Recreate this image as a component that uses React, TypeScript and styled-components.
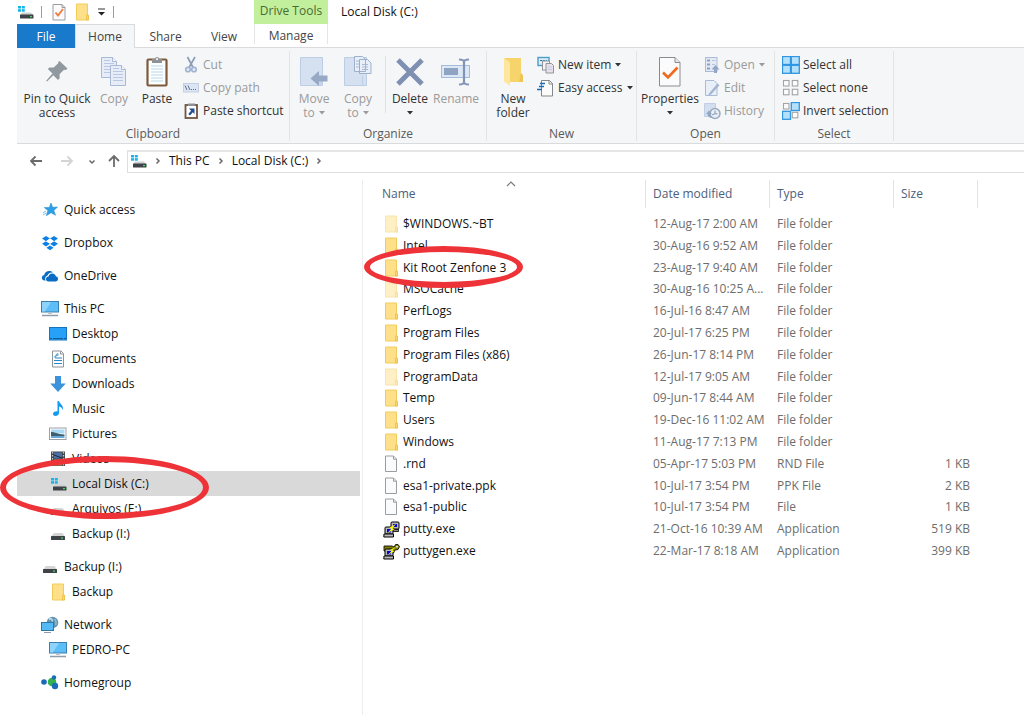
import React from 'react';
import styled, { createGlobalStyle } from 'styled-components';

const Global = createGlobalStyle`
  * { box-sizing: border-box; }
  body { margin: 0; background: #fff; font-family: "Open Sans", "Noto Sans", sans-serif; font-size: 12px; color: #111; }
  button { font: inherit; color: inherit; background: none; border: 0; padding: 0; margin: 0; }
  a { color: inherit; text-decoration: none; }
  svg { display: block; flex: none; }
`;

/* ---------- icons ---------- */

const Svg = ({ w, h, children }: { w: number; h: number; children: React.ReactNode }) => (
  <svg width={w} height={h} viewBox={`0 0 ${w} ${h}`} aria-hidden="true">{children}</svg>
);

const Drive = () => (
  <Svg w={16} h={16}>
    <path d="M4 7h8.500L15 10.500H1z" fill="#d3d4d6" />
    <rect x="1" y="10" width="14" height="4" rx=".5" fill="#3f4347" />
    <rect x="11" y="11.5" width="2" height="1.2" fill="#3fe05a" />
  </Svg>
);
const SystemDrive = () => (
  <Svg w={17} h={16}>
    <g fill="#17b4ea">
      <rect x="1" y="2" width="3" height="2.5" /><rect x="4.8" y="2" width="3" height="2.5" />
      <rect x="1" y="5.2" width="3" height="2.5" /><rect x="4.8" y="5.2" width="3" height="2.5" />
    </g>
    <path d="M5 8.5h9l2 2.5H3z" fill="#cfd1d3" />
    <rect x="3" y="10.5" width="13.5" height="4" rx=".5" fill="#3f4347" />
    <rect x="13" y="12" width="2" height="1.2" fill="#3fe05a" />
  </Svg>
);
const Folder = ({ faded = false }: { faded?: boolean }) => (
  <svg width="16" height="18" viewBox="-1 0 16 18" aria-hidden="true" opacity={faded ? 0.5 : 1}>
    <path d="M1.5 1h11v12l1 .5V17H1.5z" fill="#fee08a" stroke="#f2cc5b" />
    <path d="M11.5 12h2v5h-2z" fill="#fbd767" stroke="#e9bf49" strokeWidth=".8" />
  </svg>
);
const Page = () => (
  <svg width="16" height="18" viewBox="-1 0 16 18" aria-hidden="true">
    <path d="M1.5 1h8l3 3v12.5h-11z" fill="#fafbfc" stroke="#9a9da0" />
    <path d="M9.5 1v3.2h3" fill="#e4e6e8" stroke="#9a9da0" />
  </svg>
);
const Putty = () => (
  <Svg w={17} h={17}>
    <rect x="8" y="1" width="8" height="7" rx="1" fill="#b9b9b9" stroke="#000" />
    <rect x="10" y="3" width="4" height="3" fill="#0000e0" />
    <rect x="8.5" y="8.5" width="7" height="2" fill="#8a8a8a" stroke="#000" strokeWidth=".8" />
    <rect x="2" y="6" width="8" height="7" rx="1" fill="#b9b9b9" stroke="#000" />
    <rect x="4" y="8" width="4" height="3.5" fill="#0000e0" />
    <path d="M1 13h9.5v3H.8z" fill="#b9b9b9" stroke="#000" />
    <path d="M13 3L6.500 6.500l2 1L4.500 12l7-3.800-2-1z" fill="#ff0" />
  </Svg>
);
const PuttyGen = () => (
  <Svg w={17} h={17}>
    <path d="M1 3h8l2 1 1.5-2.5h2.500l1.500 2-1.500 3-3 .5-1.500 3L3 8H1z" fill="#7f7f00" stroke="#111" strokeWidth=".9" />
    <rect x="13.2" y="3" width="1.5" height="1.5" fill="#fff" />
    <rect x="2" y="6" width="8" height="7" rx="1" fill="#b9b9b9" stroke="#000" />
    <rect x="4" y="8" width="4" height="3.5" fill="#0000e0" />
    <path d="M1 13h9.5v3H.8z" fill="#b9b9b9" stroke="#000" />
    <path d="M13 4L7 7l2 .8L4.500 12l7-3.800-2-1z" fill="#ff0" />
  </Svg>
);
const Star = () => (
  <Svg w={16} h={16}>
    <path d="M9 1l1.600 4.300 4.900-.2-3.700 3.300 1.700 4.800L9 10.700l-4.700 3 1.600-5.200L2.300 5.600l5-.1z" fill="#2d9fe6" stroke="#2d8fd0" strokeWidth=".6" />
    <path d="M4 9L.8 10.800M4.200 11l-3.200 2" stroke="#79c2f0" />
  </Svg>
);
const Dropbox = () => (
  <Svg w={18} h={16}>
    <path d="M5 1l4 2.6-4 2.6-4-2.6zM13 1l4 2.6-4 2.6-4-2.6zM5 6.2l4 2.6-4 2.6-4-2.6zM13 6.2l4 2.6-4 2.6-4-2.6zM9 10.6l3.6 2.2L9 15.2l-3.6-2.4z" fill="#0d80e8" />
    <path d="M9 3.6l4 2.6-4 2.6-4-2.6z" fill="#fff" />
  </Svg>
);
const OneDrive = () => (
  <Svg w={18} h={14}>
    <path d="M4.500 11.500H3A2.800 2.800 0 0 1 3.200 6C4 2.500 8.600.5 11.800 3.500 8.800 3.200 7 4.600 6.500 6.600 4.500 7 3.600 9.500 4.500 11.500z" fill="#0a6cc4" />
    <path d="M7.500 12.500a2.500 2.500 0 0 1 0-5c.8-4 6.500-4 7.300-.3a2.700 2.700 0 0 1 .2 5.300z" fill="#0a6cc4" />
  </Svg>
);
const Computer = () => (
  <Svg w={18} h={18}>
    <rect x=".5" y="1.5" width="17" height="10.5" fill="#5cbdf7" stroke="#3a7fae" />
    <path d="M1 2h9L4 11.5H1z" fill="#8ed3fb" />
    <path d="M7 12.5h4V14H7z" fill="#bcc3c9" />
    <path d="M1 15.5h16" stroke="#8e9cab" strokeWidth="1.5" />
  </Svg>
);
const Desktop = () => (
  <Svg w={18} h={14}>
    <rect x=".5" y=".5" width="17" height="12.5" fill="#27a1f8" stroke="#1673bd" />
    <path d="M1 11.5h16" stroke="#125e9d" strokeDasharray="2 1 10 1" />
  </Svg>
);
const Documents = () => (
  <Svg w={16} h={18}>
    <path d="M2.500 1H11l2.500 2.500V17h-11z" fill="#fdfdfd" stroke="#8f949a" />
    <path d="M8.500 5H6M12 8H5M12 10.500H4M12 13.500H4" stroke="#2d86c5" />
    <path d="M4.500 7.500l3.500-4" stroke="#59a8d9" strokeWidth="1.500" />
    <path d="M10.500 1.500V4H13" stroke="#8f949a" fill="none" />
  </Svg>
);
const Download = () => (
  <Svg w={18} h={18}>
    <path d="M6 1h6v7.5h4.8L9 17 1.200 8.500H6z" fill="#3b93dc" />
  </Svg>
);
const Music = () => (
  <Svg w={16} h={17}>
    <path d="M7.500 1H9c.5 3 5.500 4.500 3.500 9.500C12.500 8 11 7 9 6.500V13c0 3.500-6 4-6 1 0-2 2.500-3 4.500-2.500z" fill="#149bf0" />
  </Svg>
);
const Pictures = () => (
  <Svg w={18} h={14}>
    <rect x=".5" y="1" width="16.5" height="11.5" fill="#fff" stroke="#9ba0a5" />
    <rect x="2" y="2.5" width="13.5" height="4" fill="#a9daf3" />
    <path d="M2 5c4 0 6 2 13.500 2.500V9H2z" fill="#40606b" />
    <rect x="2" y="9" width="13.5" height="2" fill="#67a9d8" />
  </Svg>
);
const Videos = () => (
  <Svg w={16} h={16}>
    <rect x="1" y=".5" width="14" height="14.5" fill="#43464b" />
    <path d="M2.500 1v14M13.500 1v14" stroke="#c8cacd" strokeWidth="1.2" strokeDasharray="1.5 1.5" />
    <rect x="4" y="1.500" width="8" height="6" fill="#4b6fa8" />
    <rect x="4" y="8.500" width="8" height="6" fill="#c08a4a" />
    <path d="M4 4l8 3M4 12l4-3 4 4" stroke="#22242a" />
  </Svg>
);
const Network = () => (
  <Svg w={18} h={18}>
    <circle cx="11.5" cy="6.5" r="5.8" fill="#5f93b1" />
    <path d="M8 3.500c2-2 4 0 3 2" stroke="#c4dfec" fill="none" strokeWidth="1.500" />
    <path d="M13.500 3c2 2 2 4 1 6" stroke="#8fbcd2" fill="none" strokeWidth="1.500" />
    <rect x=".5" y="6.5" width="12" height="8" fill="#55b9f5" stroke="#2c77a8" />
    <path d="M3 16.500h7" stroke="#8e9cab" />
  </Svg>
);
const Homegroup = () => (
  <Svg w={18} h={15}>
    <circle cx="11" cy="7" r="4.3" fill="#35b34a" />
    <circle cx="3" cy="7" r="2.8" fill="#1a6bb8" />
    <circle cx="13" cy="2.5" r="2.2" fill="#1a6bb8" />
    <circle cx="14" cy="11" r="3.2" fill="#1a6bb8" />
  </Svg>
);

const Pin = () => (
  <Svg w={24} h={32}>
    <path d="M14.500 5l8 7.500-1.500 1.500-2-.3-4.500 4.600.2 4-1.700 1.700-4.700-4.700L2 25.500l-.8-.8 6.300-7.200-4.700-4.500 1.700-1.600 4.200.2L13.500 7l-.3-1z" fill="#8f999f" />
  </Svg>
);
const Sheet = ({ x, y }: { x: number; y: number }) => (
  <g transform={`translate(${x} ${y})`}>
    <path d="M.5.5h11l4 4v16H.5z" fill="#e6edf8" stroke="#a9b9d4" />
    <path d="M11.500.5v4h4" fill="#f6f9fd" stroke="#a9b9d4" />
    <path d="M3 6.500h10M3 9.500h10M3 12.500h10M3 15.500h10M3 3.500h6" stroke="#b9c8e0" />
  </g>
);
const CopyBig = () => <Svg w={26} h={32}><Sheet x={0} y={1} /><Sheet x={9} y={9} /></Svg>;
const PasteBig = () => (
  <Svg w={22} h={32}>
    <rect x="1.5" y="3.5" width="19" height="26" rx="1" fill="#fdfefe" stroke="#7d5a3c" strokeWidth="2.2" />
    <path d="M5 10h12M5 13h12M5 16h12M5 19h12M5 22h12M5 25h12" stroke="#b8d8ee" />
    <path d="M6 3h3a2 2 0 0 1 4 0h3v4H6z" fill="#8e9296" />
    <rect x="10" y="2.2" width="2" height="1.8" fill="#eee" />
  </Svg>
);
const Scissors = () => (
  <Svg w={16} h={18}>
    <path d="M4.500 1L10 11.500M12 1L6 11.500" stroke="#8d9db8" strokeWidth="1.7" />
    <circle cx="5" cy="13.500" r="2.300" fill="#e3eaf5" stroke="#9fb2d3" strokeWidth="1.6" />
    <circle cx="11" cy="13.500" r="2.300" fill="#e3eaf5" stroke="#9fb2d3" strokeWidth="1.6" />
  </Svg>
);
const CopyPath = () => (
  <Svg w={16} h={10}>
    <rect x=".5" y=".5" width="15" height="8.5" fill="#dbe5f3" stroke="#c3d0e4" />
    <path d="M2 2.500L4 7M5 2.500L7 7" stroke="#5f7390" />
    <path d="M8 6.500h6" stroke="#5f7390" strokeDasharray="1 1" />
  </Svg>
);
const PasteShortcut = () => (
  <Svg w={16} h={18}>
    <rect x="2.5" y="3" width="11.5" height="13" fill="#fff" stroke="#6f553f" strokeWidth="1.8" />
    <path d="M5 1.500h7V4H5z" fill="#8e9296" />
    <path d="M6 6.500h5.500V12L9.800 10.300 7 13.500 5.300 12l2.800-3.200z" fill="#1f4f94" />
  </Svg>
);
const MoveTo = () => (
  <Svg w={28} h={32}>
    <path d="M.5 1.500h22v28H.5z" fill="#d5e0f0" stroke="#bdcde4" />
    <path d="M19.500 22v7.500h3V22" fill="#c5d3e8" />
    <path d="M10.500 22.500L19 15v4.500h8.500v6H19V30z" fill="#98a9c5" />
  </Svg>
);
const CopyTo = () => (
  <Svg w={28} h={32}>
    <path d="M.5 1.500h22v28H.5z" fill="#d5e0f0" stroke="#bdcde4" />
    <path d="M18.500 20v9.500" stroke="#bdcde4" />
    <path d="M10.500.5h8l3 3v12h-11zM15.500 3.500h8l3.500 3.500v10.500H15.500z" fill="#e9eff8" stroke="#9db0cd" />
    <path d="M12 5h3M12 8h3M12 11h3M18 8.500h6M18 11h6M18 13.500h6" stroke="#a9b9d4" />
  </Svg>
);
const DeleteX = () => (
  <Svg w={28} h={32}>
    <path d="M2 4l24 24M26 4L2 28" stroke="#7e8fb1" strokeWidth="5" />
  </Svg>
);
const Rename = () => (
  <Svg w={30} h={32}>
    <rect x=".5" y="9.5" width="28" height="12" fill="#dde8f6" stroke="#a5bbdb" />
    <rect x="3" y="12" width="14" height="7" fill="#8fa3c3" />
    <path d="M18 3.500c3 0 4.500.5 5 2 .5-1.500 2-2 5-2M23 5v22M18 28.500c3 0 4.500-.5 5-2 .5 1.500 2 2 5 2" fill="none" stroke="#8194b5" strokeWidth="2.2" />
  </Svg>
);
const NewFolder = () => (
  <Svg w={22} h={32}>
    <path d="M2 2h17v15l2 2.500V26H8z" fill="#f7d36b" />
    <path d="M2 2l6 4.500V30l-6-4.500z" fill="#fee79c" />
    <path d="M19 17l2 2.500V26h-4z" fill="#f0c552" />
  </Svg>
);
const NewItem = () => (
  <Svg w={18} h={18}>
    <rect x="1" y="1.5" width="11" height="8" fill="#d9eef8" stroke="#4c9cc7" strokeWidth="1.4" />
    <path d="M3 4.500h7" stroke="#2674a3" strokeDasharray="2 1" />
    <rect x="5.5" y="5" width="7" height="9" fill="#f5f5f5" stroke="#8f949a" />
    <path d="M9 7.500h5.500l2 2V17H9z" fill="#eddfe8" stroke="#8f949a" />
    <path d="M11 11h4M11 13.500h4" stroke="#b5cdec" />
  </Svg>
);
const EasyAccess = () => (
  <Svg w={18} h={18}>
    <path d="M4.500 1.500h8l3 3V17h-11z" fill="#fbfbfb" stroke="#83878b" />
    <path d="M12 1.500V5h3.500" fill="none" stroke="#83878b" />
    <path d="M3 4.500h5M2 7.500h5M0 10.500h5" stroke="#1d69b5" strokeWidth="1.5" />
  </Svg>
);
const Properties = () => (
  <Svg w={24} h={32}>
    <path d="M1.500 1.500H17l5 5V30H1.500z" fill="#fbfbfb" stroke="#898c8f" />
    <path d="M17 1.500v5h5" fill="#e8e8e8" stroke="#898c8f" />
    <path d="M5 16.500l5 5 9.500-10" fill="none" stroke="#f2691e" strokeWidth="2.6" />
  </Svg>
);
const PropertiesSmall = () => (
  <Svg w={14} h={17}>
    <path d="M1 .5h9l3 3V16H1z" fill="#fbfbfb" stroke="#9a9da0" />
    <path d="M10 .5v3h3" fill="none" stroke="#9a9da0" />
    <path d="M3.500 8.500l2.500 3 5-6.500" fill="none" stroke="#f07a3c" strokeWidth="1.8" />
  </Svg>
);
const OpenIcon = () => (
  <Svg w={16} h={18}>
    <rect x="1.5" y="1.5" width="11.5" height="14" fill="#e4ebf6" stroke="#abbbd6" />
    <path d="M3 4.500h3M3 8.500h3M3 12.500h3" stroke="#8b9fc1" strokeWidth="2.2" />
    <path d="M8 4.500h3.500M8 8.500h3" stroke="#b5c4dc" />
    <path d="M11.500 9l4 4.500H13V17h-3v-3.500H7.500z" fill="#93a6c6" />
  </Svg>
);
const EditIcon = () => (
  <Svg w={16} h={18}>
    <path d="M1.500 1.500H10l3 3v12H1.500z" fill="#e8eff9" stroke="#abbbd6" />
    <path d="M5 14.500l8.500-10 2 1.800L7 15.500l-3 .8z" fill="#a4b5d0" />
  </Svg>
);
const HistoryIcon = () => (
  <Svg w={17} h={18}>
    <path d="M.5 1.500h11v13H.5z" fill="#d3deef" stroke="#c0cfe6" />
    <circle cx="11" cy="11.5" r="5" fill="#e9eff7" stroke="#9aa9bf" strokeWidth="1.5" />
    <path d="M11 8.500v3.300h2.500M8 13l3-1.300" stroke="#8596b0" fill="none" />
    <path d="M2 12l3-3.500L8 12H6.500c0 2 1 3 2.500 4-3.500 0-5.500-1.500-5.500-4z" fill="#93a6c6" />
  </Svg>
);
const tile = { on: ['#b5e0fb', '#2f96e2'], off: ['#fcfcfc', '#a4a4a4'] };
const Tiles = ({ pattern }: { pattern: boolean[] }) => (
  <Svg w={18} h={18}>
    {pattern.map((on, i) => {
      const inset = on ? 0.5 : 1.5;
      const side = on ? 8 : 5.5;
      const [fill, stroke] = on ? tile.on : tile.off;
      return (
        <rect key={i} x={(i % 2) * 8.8 + inset} y={Math.floor(i / 2) * 8.8 + inset} width={side} height={side} fill={fill} stroke={stroke} strokeWidth={on ? 1.3 : 1.1} />
      );
    })}
  </Svg>
);
const Arrow = ({ dir, color }: { dir: 'left' | 'right' | 'up'; color: string }) => {
  const d = {
    left: 'M13 7H2M6.500 2.500L2 7l4.500 4.500',
    right: 'M1 7h11M7.500 2.500L12 7l-4.500 4.500',
    up: 'M7 13V2M2 7l5-5 5 5',
  }[dir];
  return <Svg w={15} h={15}><path d={d} fill="none" stroke={color} strokeWidth="1.8" /></Svg>;
};
const Chevron = ({ dir }: { dir: 'right' | 'down' }) => (
  <Svg w={8} h={8}>
    <path d={dir === 'right' ? 'M2.500 1.500L5 4 2.500 6.500' : 'M1.500 2.500L4 5l2.500-2.500'} fill="none" stroke="#6a6a6a" strokeWidth="1.5" />
  </Svg>
);
const SortUp = () => <Svg w={10} h={6}><path d="M1 5l4-4 4 4" fill="none" stroke="#7a7a7a" strokeWidth="1.2" /></Svg>;
const Caret = () => <Svg w={6} h={4}><path d="M0 0h6L3 3.500z" fill="currentColor" /></Svg>;
const Customize = () => (
  <Svg w={8} h={9}><path d="M0 1h7" stroke="#333" /><path d="M0 4h7L3.500 7.500z" fill="#222" /></Svg>
);

/* ---------- window frame ---------- */

const Window = styled.div`
  min-height: 100vh;
  padding-left: 17px;
  display: flex;
  flex-direction: column;
`;
const TopBar = styled.header`
  display: flex;
  height: 48px;
`;
const LeftTop = styled.div`
  width: 237px;
  display: flex;
  flex-direction: column;
`;
const QuickBar = styled.div`
  height: 24px;
  display: flex;
  align-items: center;
  gap: 8px;
`;
const QuickButton = styled.button`
  display: flex;
`;
const QuickRule = styled.span`
  width: 1px;
  height: 12px;
  margin: 0 2px 0 -1px;
  background: #9c9c9c;
`;
const Tabs = styled.nav`
  display: flex;
  height: 24px;
  border-bottom: 1px solid #dadbdc;
`;
const Tab = styled.button<{ $kind?: 'file' | 'active'; $w: number }>`
  width: ${p => p.$w}px;
  height: 24px;
  color: ${p => (p.$kind === 'file' ? '#fff' : '#444')};
  background: ${p => (p.$kind === 'file' ? '#1979ca' : p.$kind === 'active' ? '#f5f6f7' : 'transparent')};
  border: solid #dadbdc;
  border-width: ${p => (p.$kind === 'active' ? '1px 1px 0' : '0')};
`;
const ToolTab = styled.div`
  width: 74px;
  display: flex;
  flex-direction: column;
  border-bottom: 1px solid #dadbdc;
`;
const ToolTitle = styled.div`
  height: 24px;
  background: #c1ef9b;
  color: #4b6a33;
  line-height: 22px;
  text-align: center;
`;
const ToolButton = styled.button`
  height: 20px;
  line-height: 24px;
  color: #444;
  border: solid #e4e5e6;
  border-width: 0 1px;
`;
const Title = styled.h1`
  flex: 1;
  margin: 0;
  padding-left: 13px;
  font-size: 12px;
  font-weight: 400;
  line-height: 24px;
  border-bottom: 1px solid #dadbdc;
`;

/* ---------- ribbon ---------- */

const Ribbon = styled.div`
  display: flex;
  height: 96px;
  padding: 3px 0 2px;
  background: #f5f6f7;
  border-bottom: 1px solid #dadbdc;
`;
const Group = styled.section<{ $w: number }>`
  width: ${p => p.$w}px;
  display: flex;
  flex-direction: column;
  border-right: 1px solid #e2e3e4;
`;
const GroupBody = styled.div<{ $pad: number }>`
  flex: 1;
  display: flex;
  padding: 2px 0 0 ${p => p.$pad}px;
`;
const GroupLabel = styled.h2`
  margin: 0;
  font-size: 12px;
  font-weight: 400;
  line-height: 14px;
  color: #5a5a5a;
  text-align: center;
`;
const BigButton = styled.button<{ $w: number }>`
  width: ${p => p.$w}px;
  padding-top: 3px;
  display: flex;
  flex-direction: column;
  align-items: center;
  gap: 4px;
  line-height: 14px;
  white-space: nowrap;
  color: #333;
  &:disabled { color: #9a9a9a; }
`;
const BigLabel = styled.span`
  display: flex;
  flex-direction: column;
  align-items: center;
`;
const LabelLine = styled.span`
  display: flex;
  align-items: center;
  gap: 4px;
  height: 14px;
`;
const Rule = styled.span`
  width: 1px;
  height: 57px;
  margin: 3px 2px 0 5px;
  background: #dfe0e1;
`;
const SmallColumn = styled.div<{ $gap: number }>`
  display: flex;
  flex-direction: column;
  margin-left: ${p => p.$gap}px;
`;
const SmallButton = styled.button`
  height: 23px;
  display: flex;
  align-items: center;
  gap: 4px;
  white-space: nowrap;
  color: #333;
  &:disabled { color: #9a9a9a; }
`;
const IconSlot = styled.span<{ $w: number }>`
  width: ${p => p.$w}px;
  display: flex;
  justify-content: center;
`;

type BigProps = { icon: React.ReactNode; lines: string[]; w: number; caret?: boolean; disabled?: boolean };
const Big = ({ icon, lines, w, caret, disabled }: BigProps) => (
  <BigButton $w={w} disabled={disabled}>
    {icon}
    <BigLabel>
      {lines.map((line, i) => (
        <LabelLine key={line}>
          {line}
          {caret && lines.length > 1 && i === lines.length - 1 && <Caret />}
        </LabelLine>
      ))}
      {caret && lines.length === 1 && <LabelLine><Caret /></LabelLine>}
    </BigLabel>
  </BigButton>
);
type SmallProps = { icon: React.ReactNode; label: string; caret?: boolean; disabled?: boolean };
const Small = ({ icon, label, caret, disabled }: SmallProps) => (
  <SmallButton disabled={disabled}>
    <IconSlot $w={16}>{icon}</IconSlot>
    {label}
    {caret && <Caret />}
  </SmallButton>
);

/* ---------- address bar ---------- */

const AddressRow = styled.div`
  display: flex;
  align-items: center;
  height: 36px;
  padding: 6px 0 7px 12px;
`;
const NavButton = styled.button<{ $gap: number }>`
  display: flex;
  margin-right: ${p => p.$gap}px;
`;
const AddressBox = styled.nav`
  flex: 1;
  display: flex;
  align-items: center;
  gap: 7px;
  height: 23px;
  padding: 0 0 3px 2px;
  border: 1px solid #dedede;
  border-right: 0;
  border-top: 2px solid #e6e6e6;
`;

/* ---------- body ---------- */

const Body = styled.div`
  flex: 1;
  display: flex;
`;
const Side = styled.nav`
  width: 346px;
  padding: 17px 2px 0 0;
  border-right: 1px solid #ededed;
`;
const Tree = styled.ul`
  list-style: none;
  margin: 0 0 8px;
  padding: 0;
`;
const TreeItem = styled.li`
  position: relative;
`;
const TreeLink = styled.a<{ $child?: boolean; $selected?: boolean }>`
  display: flex;
  align-items: center;
  gap: 5px;
  height: 25px;
  padding-left: ${p => (p.$child ? 32 : 24)}px;
  background: ${p => (p.$selected ? '#d9d9d9' : 'transparent')};
`;
const Ring = styled.span`
  position: absolute;
  z-index: 1;
  border: 6px solid #ee3338;
  border-radius: 50%;
  pointer-events: none;
`;
const DiskRing = styled(Ring)`
  left: -17px;
  top: -15px;
  width: 209px;
  height: 63px;
`;
const FolderRing = styled(Ring)`
  left: -18px;
  top: -12px;
  width: 159px;
  height: 42px;
`;

type Node = { name: string; icon: React.ReactNode; selected?: boolean };
const tree: Node[][] = [
  [{ name: 'Quick access', icon: <Star /> }],
  [{ name: 'Dropbox', icon: <Dropbox /> }],
  [{ name: 'OneDrive', icon: <OneDrive /> }],
  [
    { name: 'This PC', icon: <Computer /> },
    { name: 'Desktop', icon: <Desktop /> },
    { name: 'Documents', icon: <Documents /> },
    { name: 'Downloads', icon: <Download /> },
    { name: 'Music', icon: <Music /> },
    { name: 'Pictures', icon: <Pictures /> },
    { name: 'Videos', icon: <Videos /> },
    { name: 'Local Disk (C:)', icon: <SystemDrive />, selected: true },
    { name: 'Arquivos (E:)', icon: <Drive /> },
    { name: 'Backup (I:)', icon: <Drive /> },
  ],
  [{ name: 'Backup (I:)', icon: <Drive /> }, { name: 'Backup', icon: <Folder /> }],
  [{ name: 'Network', icon: <Network /> }, { name: 'PEDRO-PC', icon: <Computer /> }],
  [{ name: 'Homegroup', icon: <Homegroup /> }],
];

const Main = styled.main`
  flex: 1;
  padding-left: 12px;
`;
const Table = styled.table`
  width: 100%;
  height: 382px;
  table-layout: fixed;
  border-collapse: collapse;
`;
const HeadCell = styled.th`
  position: relative;
  height: 33px;
  padding: 0;
  font-weight: 400;
  text-align: left;
  vertical-align: top;
  color: #4c607a;
`;
const HeadLabel = styled.div`
  height: 28px;
  padding-left: 7px;
  line-height: 28px;
  border-right: 1px solid #e3e3e3;
`;
const SizeBox = styled(HeadLabel)`
  width: 84px;
`;
const SortMark = styled.span`
  position: absolute;
  top: 1px;
  left: 50%;
  margin-left: -5px;
`;
const Cell = styled.td`
  padding: 0 0 0 7px;
  line-height: 20px;
  color: #6d6d6d;
  white-space: nowrap;
`;
const SizeText = styled.div`
  width: 69px;
  text-align: right;
`;
const FileName = styled.a`
  position: relative;
  display: flex;
  align-items: center;
  gap: 3px;
  height: 20px;
  color: #111;
`;

type Kind = 'folder' | 'hidden' | 'page' | 'putty' | 'puttygen';
const icons: Record<Kind, React.ReactNode> = {
  folder: <Folder />,
  hidden: <Folder faded />,
  page: <Page />,
  putty: <Putty />,
  puttygen: <PuttyGen />,
};
const files: [Kind, string, string, string, string][] = [
  ['hidden', '$WINDOWS.~BT', '12-Aug-17 2:00 AM', 'File folder', ''],
  ['folder', 'Intel', '30-Aug-16 9:52 AM', 'File folder', ''],
  ['folder', 'Kit Root Zenfone 3', '23-Aug-17 9:40 AM', 'File folder', ''],
  ['hidden', 'MSOCache', '30-Aug-16 10:25 A...', 'File folder', ''],
  ['folder', 'PerfLogs', '16-Jul-16 8:47 AM', 'File folder', ''],
  ['folder', 'Program Files', '20-Jul-17 6:25 PM', 'File folder', ''],
  ['folder', 'Program Files (x86)', '26-Jun-17 8:14 PM', 'File folder', ''],
  ['hidden', 'ProgramData', '12-Jul-17 9:05 AM', 'File folder', ''],
  ['folder', 'Temp', '09-Jun-17 8:44 AM', 'File folder', ''],
  ['folder', 'Users', '19-Dec-16 11:02 AM', 'File folder', ''],
  ['folder', 'Windows', '11-Aug-17 7:13 PM', 'File folder', ''],
  ['page', '.rnd', '05-Apr-17 5:03 PM', 'RND File', '1 KB'],
  ['page', 'esa1-private.ppk', '10-Jul-17 3:54 PM', 'PPK File', '2 KB'],
  ['page', 'esa1-public', '10-Jul-17 3:54 PM', 'File', '1 KB'],
  ['putty', 'putty.exe', '21-Oct-16 10:39 AM', 'Application', '519 KB'],
  ['puttygen', 'puttygen.exe', '22-Mar-17 8:18 AM', 'Application', '399 KB'],
];

export default function App() {
  return (
    <Window>
      <Global />
      <TopBar>
        <LeftTop>
          <QuickBar>
            <SystemDrive />
            <QuickRule />
            <QuickButton aria-label="Properties"><PropertiesSmall /></QuickButton>
            <QuickButton aria-label="New folder"><Folder /></QuickButton>
            <QuickButton aria-label="Customize toolbar"><Customize /></QuickButton>
            <QuickRule />
          </QuickBar>
          <Tabs>
            <Tab $kind="file" $w={58}>File</Tab>
            <Tab $kind="active" $w={60}>Home</Tab>
            <Tab $w={61}>Share</Tab>
            <Tab $w={56}>View</Tab>
          </Tabs>
        </LeftTop>
        <ToolTab>
          <ToolTitle>Drive Tools</ToolTitle>
          <ToolButton>Manage</ToolButton>
        </ToolTab>
        <Title>Local Disk (C:)</Title>
      </TopBar>

      <Ribbon>
        <Group $w={273}>
          <GroupBody $pad={7}>
            <Big w={66} icon={<Pin />} lines={['Pin to Quick', 'access']} />
            <Big w={48} icon={<CopyBig />} lines={['Copy']} disabled />
            <Big w={38} icon={<PasteBig />} lines={['Paste']} />
            <SmallColumn $gap={7}>
              <Small icon={<Scissors />} label="Cut" disabled />
              <Small icon={<CopyPath />} label="Copy path" disabled />
              <Small icon={<PasteShortcut />} label="Paste shortcut" />
            </SmallColumn>
          </GroupBody>
          <GroupLabel>Clipboard</GroupLabel>
        </Group>
        <Group $w={197}>
          <GroupBody $pad={2}>
            <Big w={44} icon={<MoveTo />} lines={['Move', 'to']} caret disabled />
            <Big w={44} icon={<CopyTo />} lines={['Copy', 'to']} caret disabled />
            <Rule />
            <Big w={44} icon={<DeleteX />} lines={['Delete']} caret />
            <Big w={48} icon={<Rename />} lines={['Rename']} disabled />
          </GroupBody>
          <GroupLabel>Organize</GroupLabel>
        </Group>
        <Group $w={150}>
          <GroupBody $pad={4}>
            <Big w={44} icon={<NewFolder />} lines={['New', 'folder']} />
            <SmallColumn $gap={3}>
              <Small icon={<NewItem />} label="New item" caret />
              <Small icon={<EasyAccess />} label="Easy access" caret />
            </SmallColumn>
          </GroupBody>
          <GroupLabel>New</GroupLabel>
        </Group>
        <Group $w={138}>
          <GroupBody $pad={3}>
            <Big w={60} icon={<Properties />} lines={['Properties']} caret />
            <SmallColumn $gap={4}>
              <Small icon={<OpenIcon />} label="Open" caret disabled />
              <Small icon={<EditIcon />} label="Edit" disabled />
              <Small icon={<HistoryIcon />} label="History" disabled />
            </SmallColumn>
          </GroupBody>
          <GroupLabel>Open</GroupLabel>
        </Group>
        <Group $w={119}>
          <GroupBody $pad={4}>
            <SmallColumn $gap={4}>
              <Small icon={<Tiles pattern={[true, true, true, true]} />} label="Select all" />
              <Small icon={<Tiles pattern={[false, false, false, false]} />} label="Select none" />
              <Small icon={<Tiles pattern={[false, true, true, false]} />} label="Invert selection" />
            </SmallColumn>
          </GroupBody>
          <GroupLabel>Select</GroupLabel>
        </Group>
      </Ribbon>

      <AddressRow>
        <NavButton $gap={16} aria-label="Back"><Arrow dir="left" color="#6b6b6b" /></NavButton>
        <NavButton $gap={13} aria-label="Forward"><Arrow dir="right" color="#d4d4d4" /></NavButton>
        <NavButton $gap={11} aria-label="Recent locations"><Chevron dir="down" /></NavButton>
        <NavButton $gap={5} aria-label="Up"><Arrow dir="up" color="#6b6b6b" /></NavButton>
        <AddressBox aria-label="Address">
          <SystemDrive />
          <Chevron dir="right" />
          <a href="#pc">This PC</a>
          <Chevron dir="right" />
          <a href="#c">Local Disk (C:)</a>
          <Chevron dir="right" />
        </AddressBox>
      </AddressRow>

      <Body>
        <Side aria-label="Folders">
          {tree.map((group, g) => (
            <Tree key={g}>
              {group.map((node, i) => (
                <TreeItem key={node.name}>
                  <TreeLink href="#folder" $child={i > 0} $selected={node.selected}>
                    <IconSlot $w={18}>{node.icon}</IconSlot>
                    {node.name}
                  </TreeLink>
                  {node.selected && <DiskRing />}
                </TreeItem>
              ))}
            </Tree>
          ))}
        </Side>
        <Main>
          <Table>
            <colgroup>
              <col width="271" />
              <col width="124" />
              <col width="124" />
              <col />
            </colgroup>
            <thead>
              <tr>
                <HeadCell><HeadLabel>Name</HeadLabel><SortMark><SortUp /></SortMark></HeadCell>
                <HeadCell><HeadLabel>Date modified</HeadLabel></HeadCell>
                <HeadCell><HeadLabel>Type</HeadLabel></HeadCell>
                <HeadCell><SizeBox>Size</SizeBox></HeadCell>
              </tr>
            </thead>
            <tbody>
              {files.map(([kind, name, date, type, size]) => (
                <tr key={name}>
                  <Cell>
                    <FileName href="#file">
                      <IconSlot $w={18}>{icons[kind]}</IconSlot>
                      {name}
                      {name.startsWith('Kit') && <FolderRing />}
                    </FileName>
                  </Cell>
                  <Cell>{date}</Cell>
                  <Cell>{type}</Cell>
                  <Cell><SizeText>{size}</SizeText></Cell>
                </tr>
              ))}
            </tbody>
          </Table>
        </Main>
      </Body>
    </Window>
  );
}
